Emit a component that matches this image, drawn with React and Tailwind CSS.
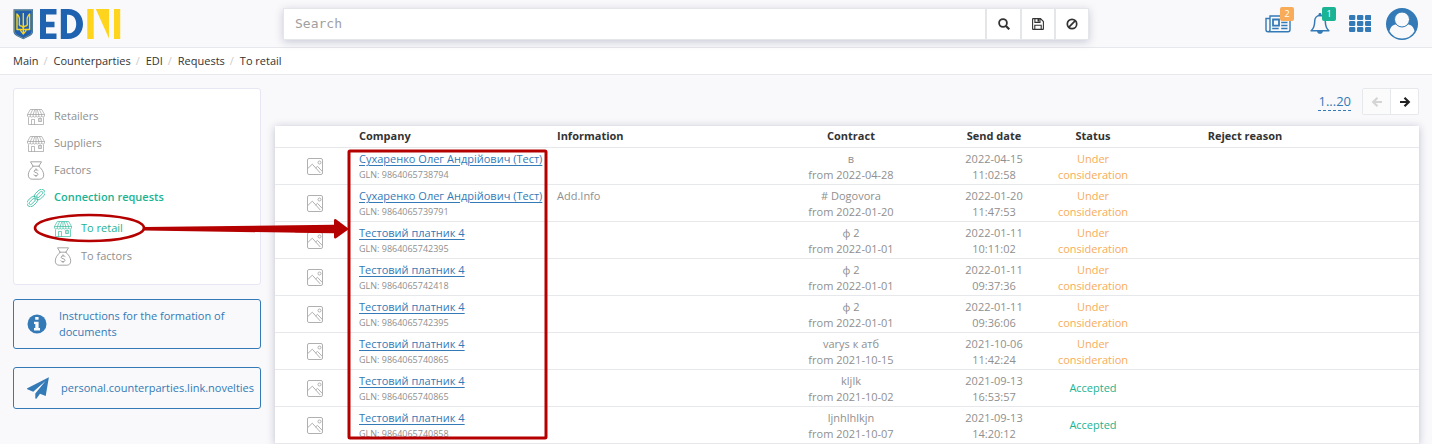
import React from "react";

const font = "font-['Open_Sans',sans-serif]";

const requests = [
  ["Сухаренко Олег Андрійович (Тест)", "9864065738794", "", "в", "2022-04-28", "2022-04-15 11:02:58", false],
  ["Сухаренко Олег Андрійович (Тест)", "9864065739791", "Add.Info", "# Dogovora", "2022-01-20", "2022-01-20 11:47:53", false],
  ["Тестовий платник 4", "9864065742395", "", "ф 2", "2022-01-01", "2022-01-11 10:11:02", false],
  ["Тестовий платник 4", "9864065742418", "", "ф 2", "2022-01-01", "2022-01-11 09:37:36", false],
  ["Тестовий платник 4", "9864065742395", "", "ф 2", "2022-01-01", "2022-01-11 09:36:06", false],
  ["Тестовий платник 4", "9864065740865", "", "varys к атб", "2021-10-15", "2021-10-06 11:42:24", false],
  ["Тестовий платник 4", "9864065740865", "", "kljlk", "2021-10-02", "2021-09-13 16:53:57", true],
  ["Тестовий платник 4", "9864065740858", "", "ljnhlhlkjn", "2021-10-07", "2021-09-13 14:20:12", true],
];

function Logo() {
  return (
    <svg viewBox="0 0 108 32" className="h-8 w-[108px]" role="img" aria-label="EDIN">
      <path d="M.5 1.200h19.500v22q0 3-3.200 4.800l-6.500 3.300-6.600-3.300Q.5 26.200.5 23.200z" fill="#1f5fae" />
      <path d="M1.400 2.100h17.700v21q0 2.600-2.700 4.100l-6.100 3.100-6.200-3.100q-2.700-1.500-2.700-4.100z" fill="none" stroke="#c9bd5a" strokeWidth=".5" />
      <g fill="none" stroke="#f8d428" strokeWidth="1.400" strokeLinejoin="round">
        <path d="M4 6v15.500h3.300c.3 1.800 1.500 2.700 3 4.500 1.500-1.800 2.700-2.700 3-4.500h3.300V6c-2.200 2-2.800 4.500-2.400 7.500.3 2 .5 3.300-.6 4.300-1.500 0-2.500.7-3.300 1.700-.8-1-1.800-1.700-3.300-1.700-1.100-1-.9-2.300-.6-4.300C6.800 10.500 6.200 8 4 6z" />
        <path d="M10.300 5v21M7.300 21.500h6" />
      </g>
      <path d="M27 1h16.500v5.500H33v7.300h8.500v5.400H33v6.300h10.500V31H27z" fill="#1f62b0" />
      <path fillRule="evenodd" d="M47.800 1h7.500C64 1 70 7.500 70 16S64 31 55.300 31h-7.500zM54 6.700v18.600h1.500c4.800 0 7.700-3.700 7.700-9.300s-2.900-9.300-7.700-9.300z" fill="#1f62b0" />
      <path d="M74.300 1h6.400v30h-6.400zM82.800 1H96v29.500zM101 1h6.200v30H101z" fill="#ffd41c" />
    </svg>
  );
}

function StoreIcon() {
  return (
    <svg viewBox="0 0 18 18" className="size-[18px] shrink-0" fill="none" stroke="currentColor" strokeWidth=".6" aria-hidden="true">
      <path d="M3.300 1.500h11.400l2.800 5v1.700a1.600 1.600 0 0 1-2.800 0 1.600 1.600 0 0 1-2.900 0 1.600 1.600 0 0 1-2.800 0 1.600 1.600 0 0 1-2.900 0 1.600 1.600 0 0 1-2.900 0 1.600 1.600 0 0 1-2.700 0V6.500zM.5 6.500h17M5.700 1.500 3.300 6.500v1.700M7.900 1.500 6.100 6.500v1.700M10.100 1.500l1.700 5v1.700M12.300 1.500l2.400 5v1.700M9 1.500v6.700M1.500 9.500v7h15v-7M4.500 16.500v-5h3v5M11.500 10.500h3v3h-3zM13 10.500v3" />
    </svg>
  );
}

function MoneyIcon() {
  return (
    <svg viewBox="0 0 18 19" className="h-[19px] w-[18px] shrink-0" fill="none" stroke="currentColor" strokeWidth=".8" strokeLinecap="round" strokeLinejoin="round" aria-hidden="true">
      <path d="M6 5 3.500.8h11L12 5M5.700 5.200h6.600M6 5.500C3.300 7.500 1.300 11 1.300 13.800c0 3.100 1.600 4.400 4 4.400h7.400c2.400 0 4-1.300 4-4.400 0-2.800-2-6.300-4.700-8.300" />
      <path d="M11.100 9.400C10.500 8.700 7.300 8.300 7.100 10.200c-.1 1.900 4 1 3.900 3.100-.1 1.900-3.400 1.700-4.200.6M9 7.800v1M9 14.600v1" />
    </svg>
  );
}

function ChainIcon() {
  return (
    <svg viewBox="0 0 18 18" className="size-[18px] shrink-0" fill="none" stroke="currentColor" strokeWidth=".7" aria-hidden="true">
      <g transform="rotate(-43 9 9)">
        <rect x="-2.200" y="5.300" width="12" height="7.400" rx="3.700" />
        <rect x="0" y="7.600" width="7.600" height="2.800" rx="1.400" />
        <rect x="8.200" y="5.300" width="12" height="7.400" rx="3.700" />
        <rect x="10.400" y="7.600" width="7.600" height="2.800" rx="1.400" />
      </g>
    </svg>
  );
}

function PictureIcon() {
  return (
    <svg viewBox="0 0 16 17" className="mx-auto h-[17px] w-4" fill="none" stroke="#b0b0b0" strokeWidth="1" aria-hidden="true">
      <rect x=".5" y=".5" width="15" height="16" rx="1.500" />
      <circle cx="12.500" cy="4.500" r="1.500" />
      <path d="m.8 10.500 4.500-4.300 8 8.800M8.500 10l2-1.600 5 5.300" />
    </svg>
  );
}

function SearchIcon() {
  return (
    <svg viewBox="0 0 12 12" className="size-3" fill="none" stroke="currentColor" aria-hidden="true">
      <circle cx="5" cy="5" r="3.900" strokeWidth="1.800" />
      <path d="m8 8 3.300 3.300" strokeWidth="2.200" />
    </svg>
  );
}

function SaveIcon() {
  return (
    <svg viewBox="0 0 12 12" className="size-3" fill="none" stroke="currentColor" strokeWidth="1.100" aria-hidden="true">
      <path d="M.6 1.100q0-.5.500-.5H8.500l2.900 2.900v7.400q0 .5-.5.500H1.100q-.5 0-.5-.5zM2.800 11.400V7.300h6.400v4.100M2.900.6v3.800H8V.6" />
      <path d="M5.500 1h1.800v2.600H5.500z" fill="currentColor" stroke="none" />
    </svg>
  );
}

function BanIcon() {
  return (
    <svg viewBox="0 0 12 12" className="size-3" fill="none" stroke="currentColor" strokeWidth="1.700" aria-hidden="true">
      <circle cx="6" cy="6" r="4.700" />
      <path d="m2.700 9.300 6.600-6.600" />
    </svg>
  );
}

function ArrowIcon({ back }) {
  return (
    <svg viewBox="0 0 12 12" className="size-3" fill="none" stroke="currentColor" strokeWidth="2.200" aria-hidden="true">
      <path d={back ? "M11 6H3M6.500 1.700 2.200 6l4.300 4.300" : "M1 6h8M5.500 1.700 9.800 6l-4.300 4.300"} />
    </svg>
  );
}

function NewsIcon() {
  return (
    <svg viewBox="0 0 26 18" className="h-[18px] w-[26px]" fill="none" stroke="currentColor" strokeWidth="1.400" aria-hidden="true">
      <path d="M4.700 3.500H1v11.300a2 2 0 0 0 4 0V1h20v13.800a2 2 0 0 1-2 2H3" />
      <path d="M8 4.500h6v6.200H8z" strokeWidth="1.800" />
      <path d="M16.200 4.500h6.300M16.200 7.500h6.300M16.200 10.500h6.300M7.200 13.500h6.500M16.200 13.500h6.300" />
    </svg>
  );
}

function BellIcon() {
  return (
    <svg viewBox="0 0 20 22" className="h-[22px] w-5" fill="none" stroke="currentColor" strokeWidth="1.500" strokeLinejoin="round" aria-hidden="true">
      <path d="M10 2.600c-3.400 0-5.300 2.600-5.300 5.600 0 4.800-1 7.300-3.600 9.500h17.800c-2.600-2.200-3.600-4.700-3.600-9.500 0-3-1.900-5.600-5.300-5.600z" />
      <path d="M8.800 2.800V1.300a1.200 1.200 0 0 1 2.400 0v1.500zM7.400 18h5.200a2.600 2.600 0 0 1-5.200 0z" fill="currentColor" strokeWidth=".6" />
    </svg>
  );
}

function GridIcon() {
  return (
    <svg viewBox="0 0 22 18" className="h-[18px] w-[22px]" fill="currentColor" aria-hidden="true">
      {[0, 8, 16].map((x) => [0, 6, 12].map((y) => <rect key={`${x}-${y}`} x={x} y={y} width="6.300" height="5" rx="1.200" />))}
    </svg>
  );
}

function UserIcon() {
  return (
    <svg viewBox="0 0 32 32" className="size-8" aria-hidden="true">
      <circle cx="16" cy="16" r="16" fill="#337ab7" />
      <path d="M3.500 23.200c.8-4.200 3.300-6.700 7-6.700 3.500 3.300 7.500 3.300 11 0 3.700 0 6.200 2.500 7 6.700A14.400 14.400 0 0 1 16 30.400 14.400 14.400 0 0 1 3.500 23.200z" fill="#f9f9fb" />
      <circle cx="16" cy="11.500" r="7.500" fill="#f9f9fb" stroke="#337ab7" strokeWidth="1" />
    </svg>
  );
}

function InfoIcon() {
  return (
    <svg viewBox="0 0 20 20" className="size-5 shrink-0" aria-hidden="true">
      <circle cx="10" cy="10" r="9.500" fill="#337ab7" />
      <path d="M8.200 3h3.400v2.800H8.200zM7 7.700h4.600v6.400H13v2.300H7v-2.300h1.300V10H7z" fill="#f9f9fb" />
    </svg>
  );
}

function PlaneIcon() {
  return (
    <svg viewBox="0 0 22 22" className="size-[22px] shrink-0" fill="#337ab7" aria-hidden="true">
      <path d="M21.900.2 18.700 19l-5.700-2.200-3.400 4.800q-.8.600-1.300-.3V16.600L18.500 4 6.200 14.700.3 12.300q-.6-.5 0-1z" />
    </svg>
  );
}

function NavItem({ icon, children, className = "" }) {
  return (
    <li>
      <a href="#" className={`flex h-[27px] items-center gap-[9px] ${className}`}>
        {icon}
        <span>{children}</span>
      </a>
    </li>
  );
}

function Highlight() {
  return (
    <svg className="pointer-events-none absolute top-0 left-0 h-[444px] w-[560px]" viewBox="0 0 560 444" fill="none" stroke="#b50000" aria-hidden="true">
      <ellipse cx="89.500" cy="228" rx="54.500" ry="13" strokeWidth="2.600" />
      <rect x="349" y="151" width="197" height="287" strokeWidth="3" rx="1" />
      <path d="M144 227 L334 224.800V220q.5-1.500 2-.8L349 229l-13 9.300q-1.500.7-2-.8v-4.300L144 230.600z" fill="#b50000" stroke="none" />
    </svg>
  );
}

export default function App() {
  const crumbs = ["Main", "Counterparties", "EDI", "Requests", "To retail"];
  return (
    <div className={`relative h-screen overflow-hidden bg-[#f9f9fb] text-[11px] text-[#8f8f8f] ${font}`}>
      <header className="flex h-12 items-center border-b border-[#e7e8ec]">
        <a href="#" className="w-[283px] shrink-0 pl-[13px]"><Logo /></a>
        <form role="search" className="flex h-8 min-w-0 flex-1 divide-x-2 divide-[#e5e6e9] border border-[#e5e6e9] bg-white text-[#333] shadow-[0_2px_8px_rgba(60,65,110,0.25)]" onSubmit={(e) => e.preventDefault()}>
          <input aria-label="Search" placeholder="Search" className="min-w-0 flex-1 px-[11px] font-['DejaVu_Sans_Mono',monospace] text-[13px] outline-none placeholder:text-[#a0a0a0]" />
          <button type="submit" aria-label="Find" className="flex w-[35px] items-center justify-center"><SearchIcon /></button>
          <button type="button" aria-label="Save" className="flex w-[34px] items-center justify-center"><SaveIcon /></button>
          <button type="button" aria-label="Clear" className="flex w-8 items-center justify-center"><BanIcon /></button>
        </form>
        <div className="flex w-[343px] shrink-0 items-center justify-end gap-[19px] pr-[14px] text-[#337ab7]">
          <button type="button" aria-label="News" className="relative">
            <NewsIcon />
            <span className="absolute -top-2 left-[15px] flex h-[14px] w-[14px] items-center justify-center rounded-[2px] bg-[#f8ac59] text-[9px] text-white">2</span>
          </button>
          <button type="button" aria-label="Notifications" className="relative">
            <BellIcon />
            <span className="absolute -top-[6px] left-3 flex h-[14px] w-[14px] items-center justify-center rounded-[2px] bg-[#1ab394] text-[9px] text-white">1</span>
          </button>
          <div className="flex items-center gap-[15px]">
            <button type="button" aria-label="Applications"><GridIcon /></button>
            <button type="button" aria-label="Profile"><UserIcon /></button>
          </div>
        </div>
      </header>

      <nav aria-label="Breadcrumb" className="h-[27px] border-b border-[#e7e8ec] bg-white px-[13px]">
        <ol className="flex h-full items-center text-[#333]">
          {crumbs.map((c, i) => (
            <li key={c} className="flex">
              {i > 0 && <span className="w-[15px] pl-[5px] text-[#ccc]">/</span>}
              <a href="#">{c}</a>
            </li>
          ))}
        </ol>
      </nav>

      <div className="flex pt-[13px] pr-[13px] pl-[13px]">
        <aside className="w-[248px] shrink-0">
          <nav aria-label="Sections" className="rounded-[3px] border border-[#e7e7f3] bg-white px-[13px] pt-[14px] pb-[14px]">
            <ul>
              <NavItem icon={<StoreIcon />}>Retailers</NavItem>
              <NavItem icon={<StoreIcon />}>Suppliers</NavItem>
              <NavItem icon={<MoneyIcon />}>Factors</NavItem>
              <NavItem icon={<ChainIcon />} className="font-semibold text-[#1ab394]">Connection requests</NavItem>
            </ul>
            <ul className="mt-1 space-y-px pl-[27px]">
              <NavItem icon={<StoreIcon />} className="text-[#1ab394]">To retail</NavItem>
              <NavItem icon={<MoneyIcon />}>To factors</NavItem>
            </ul>
          </nav>
          <a href="#" className="mt-[14px] flex h-[50px] items-center gap-3 rounded-[3px] border border-[#337ab7] px-[13px] leading-4 text-[#337ab7]">
            <InfoIcon />
            <span>Instructions for the formation of documents</span>
          </a>
          <a href="#" className="mt-[18px] flex h-[42px] items-center gap-3 rounded-[3px] border border-[#337ab7] pl-[13px] text-[#337ab7]">
            <PlaneIcon />
            <span>personal.counterparties.link.novelties</span>
          </a>
        </aside>

        <main className="ml-[14px] min-w-0 flex-1">
          <div className="mb-[11px] flex h-[27px] items-center justify-end gap-[11px]">
            <button type="button" className="border-b border-dashed border-[#337ab7] text-[13px] leading-[18px] text-[#337ab7]">1...20</button>
            <div className="flex h-full divide-x divide-[#e7e8ec] rounded-[2px] border border-[#e7e8ec] bg-white">
              <button type="button" disabled aria-label="Previous page" className="flex w-[28px] items-center justify-center bg-[#fbfbfb] text-[#d5d5d5]"><ArrowIcon back /></button>
              <button type="button" aria-label="Next page" className="flex w-[27px] items-center justify-center text-[#222]"><ArrowIcon /></button>
            </div>
          </div>
          <table className="w-full table-fixed border-collapse bg-white text-center leading-4 shadow-[0_1px_8px_rgba(60,65,110,0.3)]">
            <colgroup>
              <col className="w-[80px]" />
              <col className="w-[198px]" />
              <col />
              <col className="w-[188px]" />
              <col className="w-[98px]" />
              <col className="w-[100px]" />
              <col />
              <col className="w-[72px]" />
            </colgroup>
            <thead>
              <tr className="h-[21px] border-b border-[#e7e8ec] text-[#333]">
                <td />
                <th className="px-1 text-left">Company</th>
                <th className="px-1 text-left">Information</th>
                <th>Contract</th>
                <th>Send date</th>
                <th>Status</th>
                <th>Reject reason</th>
                <td />
              </tr>
            </thead>
            <tbody>
              {requests.map(([name, gln, info, contract, from, sent, accepted], i) => (
                <tr key={i} className="h-[37px] border-b border-[#e7e8ec]">
                  <td className="pt-[2px]"><PictureIcon /></td>
                  <td className="px-1 pt-[3px] pb-px text-left align-top whitespace-nowrap">
                    <a href="#" className="block text-[#337ab7] underline underline-offset-2">{name}</a>
                    <span className="block text-[9px]">GLN: {gln}</span>
                  </td>
                  <td className="px-1 pt-[3px] pb-px text-left align-top">{info}</td>
                  <td className="px-1 pt-[3px] pb-px align-top">{contract}<br />from {from}</td>
                  <td className="px-1 pt-[3px] pb-px align-top">{sent}</td>
                  <td className={accepted ? "px-1 pt-px text-[#1ab394]" : "px-1 pt-[3px] pb-px align-top text-[#f8ac59]"}>{accepted ? "Accepted" : "Under consideration"}</td>
                  <td />
                  <td />
                </tr>
              ))}
            </tbody>
          </table>
        </main>
      </div>
      <Highlight />
    </div>
  );
}
